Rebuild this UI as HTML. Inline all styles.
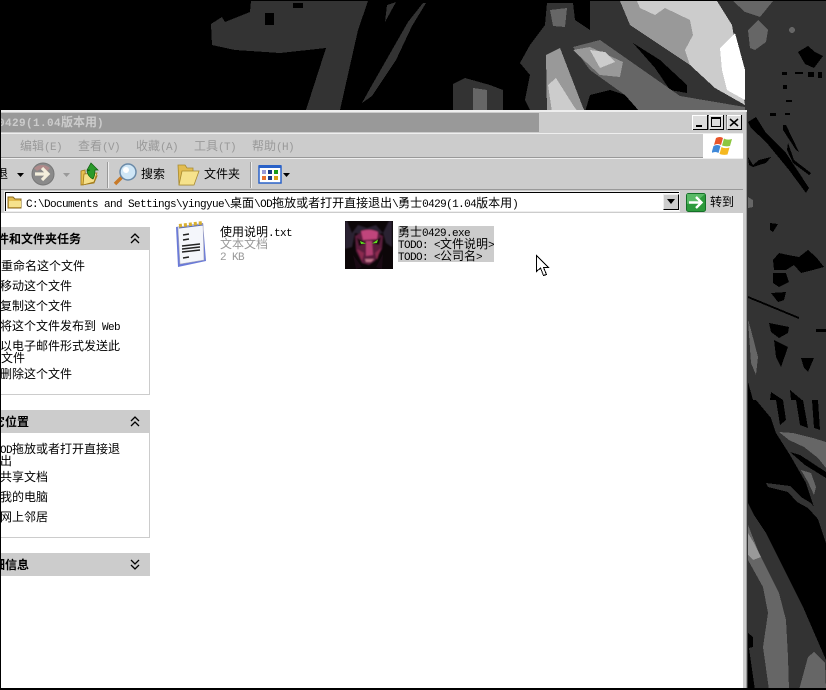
<!DOCTYPE html>
<html><head><meta charset="utf-8">
<style>
html,body{margin:0;padding:0;background:#000;}
#r{position:relative;width:826px;height:690px;overflow:hidden;background:#000;font-family:"WenQuanYi Zen Hei","Noto Sans CJK SC",sans-serif;font-size:12px;color:#000;}
#r div{position:absolute;}
.t{white-space:nowrap;line-height:12px;height:12px;}
.t i{font:normal 11px/12px "Liberation Mono",monospace;letter-spacing:-.6px;}
.t i.h{font-weight:bold;letter-spacing:.4px;}
.b{font-weight:bold;}
.g{color:#999;}
svg{position:absolute;overflow:hidden;}
</style></head><body><div id="r">

<svg style="left:0;top:0" width="826" height="690" viewBox="0 0 826 690" shape-rendering="crispEdges">
<rect width="826" height="690" fill="#000"/>
<g fill="#333">
<polygon points="251,1 368,1 358,30 340,110 306,110 326,48 280,53 235,50 212,45 211,24 222,17 225,22 250,12"/>
<polygon points="387,5 396,2 385,22"/>
<polygon points="423,3 426,3 412,26 396,60 372,96 362,103 372,85 392,50 408,22"/>
<polygon points="453,84 465,78 490,85 503,90 503,112 453,112"/>
<polygon points="520,63 530,45 545,25 547,3 573,3 575,20 590,30 590,1 826,1 826,110 530,110 525,100 530,75"/>
<rect x="746" y="110" width="80" height="580"/>
</g>
<g fill="#000">
<rect x="265" y="13" width="9" height="12"/><rect x="293" y="3" width="10" height="5"/>
<polygon points="590,95 610,90 640,100 665,112 585,112"/>
<polygon points="633,43 660,60 687,85 687,93 670,90 655,68"/>
<polygon points="798,52 808,46 815,52 823,56 814,68 805,64"/>
<rect x="782" y="72" width="5" height="3"/><rect x="795" y="72" width="8" height="2"/><rect x="808" y="72" width="6" height="5"/><rect x="818" y="72" width="4" height="6"/>
<rect x="783" y="85" width="4" height="4"/><rect x="786" y="100" width="6" height="2"/>
</g>
<g fill="#666">
<polygon points="550,10 567,8 565,27 553,26"/>
<polygon points="473,88 487,90 487,112 473,112"/>
<polygon points="573,47 600,40 640,68 680,96 745,107 745,112 640,112 625,95 590,70"/>
<polygon points="733,1 773,1 760,17 745,12"/>
<polygon points="748,30 758,20 768,30 766,42 755,50 750,48"/>
<circle cx="792" cy="30" r="3"/>
</g>
<g fill="#999">
<polygon points="573,50 590,47 623,62 620,77 600,75"/>
<polygon points="546,55 560,48 582,105 585,112 547,112"/>
<polygon points="620,1 717,1 730,25 745,105 715,88 690,65 660,45 630,25"/>
</g>
<g fill="#ccc">
<polygon points="548,85 556,78 573,105 578,112 552,112"/>
<polygon points="590,50 605,52 615,62 600,68"/>
<polygon points="637,1 717,1 732,25 745,105 715,88 690,65 685,50 693,35 690,20 665,8 655,15 640,8"/>
</g>
<polygon fill="#fff" points="720,48 735,33 745,70 745,100 727,90 722,70"/>

<g fill="#000">
<polygon points="748,122 756,117 766,133 786,153 809,188 806,193 789,170 766,142 751,128"/>
<polygon points="783,125 786,125 799,152 796,150 783,130"/>
<polygon points="788,143 794,160 811,173 809,175 793,163 787,150"/>
<polygon points="748,157 753,165 759,160 771,157 766,163 759,165 753,167 749,165"/>
<polygon points="770,223 778,224 773,232 770,230"/>
<polygon points="773,260 779,253 788,255 799,257 808,250 816,257 824,267 813,270 801,273 794,265 786,270 774,270"/>
<polygon points="773,273 786,273 789,282 779,287 773,283"/>
<polygon points="771,293 786,292 784,300 778,302"/>
<polygon points="748,296 799,317 799,319 748,298"/>
<polygon points="769,323 789,327 788,333 779,338 771,332"/>
<polygon points="774,340 788,347 781,367 776,357"/>
<polygon points="801,358 814,358 808,372 804,368"/>
<polygon points="748,382 753,400 748,400"/>
<polygon points="771,392 783,400 770,400"/>
<polygon points="790,390 802,400 791,400"/>
<rect x="816" y="329" width="10" height="3"/><rect x="770" y="113" width="6" height="3"/><rect x="785" y="113" width="5" height="2"/>
<polygon points="748,400 756,400 771,418 776,433 790,455 806,483 826,543 826,660 803,607 783,567 766,533 754,515 748,503"/>
<polygon points="776,400 783,400 786,420 780,425"/>
<polygon points="796,400 803,400 808,428 800,425"/>
<polygon points="812,400 818,400 820,430 814,428"/>
<polygon points="790,452 800,455 826,472 826,478 805,465"/>
<polygon points="748,633 753,637 753,647 749,648 755,690 748,690"/>
</g>
<polygon fill="#333" points="766,483 790,486 801,497 811,503 826,523 826,528 808,508 797,502 788,492 768,487"/>
<g fill="#666">
<polygon points="748,197 753,200 753,207 748,208"/>
<polygon points="748,320 751,330 758,357 756,375 751,363"/>
<polygon points="779,432 793,433 813,438 826,442 826,468 818,458 804,447 789,440"/>
<polygon points="801,470 811,473 816,487 814,495 808,482"/>
<polygon points="748,525 759,553 779,593 786,620 788,657 789,690 769,690 763,647 768,613 763,587 748,560"/>
<polygon points="799,690 808,657 814,652 825,663 826,690"/>
</g>
<polygon fill="#999" points="748,533 754,543 761,557 753,560 748,555"/>
<rect y="688" width="826" height="2" fill="#000"/>
</svg>

<!-- window -->
<div style="left:1px;top:110px;width:746px;height:578px;background:#ccc;border-top:2px solid #eee;box-sizing:border-box;"></div>
<div style="left:746px;top:112px;width:1px;height:576px;background:#999;"></div>
<div style="left:1px;top:113px;width:538px;height:19px;background:#999;"></div>
<div class="t b" style="left:-2px;top:116px;color:#ccc;"><i class="h">0429(1.04</i>版本用<i class="h">)</i></div>

<!-- caption buttons -->
<svg style="left:692px;top:115px" width="51" height="16" shape-rendering="crispEdges">
<g fill="#ccc" stroke="#000"><rect x="0.5" y="0.5" width="15" height="14" fill="#ddd"/><rect x="16.5" y="0.5" width="15" height="14" fill="#ddd"/><rect x="34.5" y="0.5" width="15" height="14" fill="#ddd"/></g>
<path d="M0 .5H15M.5 0V15M17 .5H31M17 .5V15M35 .5H49M35 .5V15" stroke="#fff" fill="none"/>
<rect x="4" y="10" width="6" height="2" fill="#000"/>
<path d="M19.500 3.500h9v8h-9zM19 2.500h10" fill="none" stroke="#000"/>
<path d="M38 4l8 7M46 4l-8 7" stroke="#000" stroke-width="1.500" fill="none" shape-rendering="auto"/>
</svg>

<!-- menu -->
<div style="left:1px;top:133px;width:742px;height:1px;background:#eee;"></div>
<div style="left:1px;top:157px;width:702px;height:1px;background:#999;"></div>
<div style="left:1px;top:158px;width:742px;height:1px;background:#eee;"></div>
<div class="t g" style="left:20px;top:140px;">编辑<i>(E)</i></div>
<div class="t g" style="left:78px;top:140px;">查看<i>(V)</i></div>
<div class="t g" style="left:136px;top:140px;">收藏<i>(A)</i></div>
<div class="t g" style="left:194px;top:140px;">工具<i>(T)</i></div>
<div class="t g" style="left:252px;top:140px;">帮助<i>(H)</i></div>
<div style="left:703px;top:134px;width:40px;height:24px;background:#fff;"></div>
<svg style="left:712px;top:136px" width="22" height="20" viewBox="0 0 22 20">
<path d="M4 2q4-2 7 0l-2 7q-3-2-7 0z" fill="#e8552a"/>
<path d="M12 2.500q3 2 8 .5l-2 7q-4 1-8-.5z" fill="#8cc63f"/>
<path d="M1.500 10q4-2 7 0l-2 7q-3-2-7 0z" fill="#3f88d8"/>
<path d="M9.500 11q3 2 8 .5l-2 7q-4 1-8-.5z" fill="#f5b81f"/>
</svg>

<!-- toolbar -->
<div style="left:1px;top:189px;width:742px;height:1px;background:#999;"></div>
<div class="t" style="left:-4px;top:168px;">退</div>
<svg style="left:0;top:160px" width="300" height="30" viewBox="0 0 300 30">
<path d="M17 13h7l-3.500 4z" fill="#000"/>
<circle cx="43" cy="14" r="11" fill="#8a8a8a" stroke="#777"/>
<path d="M34 8q8-6 16 0l-3 3q-5-4-10 0z" fill="#b08a8a"/>
<path d="M35 14h12M42 8l6 6-6 6" stroke="#f4efdc" stroke-width="3.200" fill="none"/>
<path d="M63 13h7l-3.500 4z" fill="#999"/>
<path d="M81 11l4-1 1 12 11-6-3 7-13 2z" fill="#e8c050" stroke="#a07818" stroke-width=".8"/>
<path d="M84 14l13-1-3 9-11 3z" fill="#f6e08a" stroke="#a07818" stroke-width=".8"/>
<path d="M91 3l7 7h-3q0 6-2 9-5-2-6-8l3-1h-3z" fill="#2a9a2a" stroke="#0c5c0c" stroke-width=".7"/>
<rect x="107" y="2" width="1" height="26" fill="#999"/><rect x="108" y="2" width="1" height="26" fill="#eee"/>
<path d="M115 24l8-8" stroke="#c87a28" stroke-width="3.500" fill="none"/>
<circle cx="128" cy="12" r="8" fill="#cfe6f6" stroke="#6a8aa8" stroke-width="1.500"/>
<circle cx="126" cy="10" r="3" fill="#fff"/>
<path d="M178 5h7l2 3h6v17h-14z" fill="#e2bc50" stroke="#a88a30" stroke-width=".8"/>
<path d="M182 11h17l-5 14h-15z" fill="#f6e28c" stroke="#a88a30" stroke-width=".8"/>
<rect x="250" y="2" width="1" height="26" fill="#999"/><rect x="251" y="2" width="1" height="26" fill="#eee"/>
<rect x="259" y="6" width="22" height="17" fill="#fff" stroke="#2a62c8" stroke-width="1.500"/>
<rect x="259" y="5" width="22" height="3" fill="#2a62c8"/>
<g shape-rendering="crispEdges">
<rect x="262" y="10" width="4" height="4" fill="#9a9ad8"/><rect x="268" y="10" width="4" height="4" fill="#1a3a8a"/><rect x="274" y="10" width="4" height="4" fill="#1a9a1a"/>
<rect x="262" y="16" width="4" height="4" fill="#e87030"/><rect x="268" y="16" width="4" height="4" fill="#1a3a8a"/><rect x="274" y="16" width="4" height="4" fill="#d8a018"/>
</g>
<path d="M283 13h7l-3.500 4z" fill="#000"/>
</svg>
<div class="t" style="left:141px;top:168px;">搜索</div>
<div class="t" style="left:204px;top:168px;">文件夹</div>

<!-- address -->
<div style="left:4px;top:191px;width:676px;height:21px;background:#eee;"></div>
<div style="left:5px;top:192px;width:674px;height:19px;background:#fff;border-top:1px solid #000;border-left:1px solid #000;box-sizing:border-box;"></div>
<svg style="left:7px;top:195px" width="16" height="14" viewBox="0 0 16 14">
<path d="M1 2h5l2 2h6v9H1z" fill="#e2bc50" stroke="#8a6a20"/><path d="M2 6h12v6H2z" fill="#f6e28c"/>
</svg>
<div class="t" style="left:26px;top:197px;"><i>C:\Documents and Settings\yingyue\</i>桌面<i>\OD</i>拖放或者打开直接退出<i>\</i>勇士<i>0429(1.04</i>版本用<i>)</i></div>
<div style="left:663px;top:194px;width:16px;height:16px;background:#ccc;border:1px solid #000;border-top-color:#eee;border-left-color:#eee;box-sizing:border-box;"></div>
<svg style="left:666px;top:199px" width="10" height="6"><path d="M1 0h8L5 5z" fill="#000"/></svg>
<svg style="left:686px;top:193px" width="20" height="19" viewBox="0 0 20 19">
<rect x=".5" y=".5" width="19" height="18" rx="2" fill="#2c9a3c" stroke="#157028"/>
<path d="M1 1h18l-9 8-9 2z" fill="#6cc878" opacity=".7"/>
<path d="M3 9.500h12M10 4l5.500 5.500L10 15" stroke="#fff" stroke-width="2.400" fill="none"/>
</svg>
<div class="t" style="left:710px;top:196px;">转到</div>

<!-- content -->
<div style="left:1px;top:213px;width:742px;height:475px;background:#fff;"></div>

<!-- left panels -->
<div style="left:1px;top:227px;width:149px;height:23px;background:#ccc;"></div>
<div style="left:1px;top:250px;width:149px;height:145px;background:#fff;border:solid #ccc;border-width:0 1px 1px 0;box-sizing:border-box;"></div>
<div class="t b" style="left:-3px;top:233px;">件和文件夹任务</div>
<div class="t" style="left:1px;top:260px;">重命名这个文件</div>
<div class="t" style="left:0;top:280px;">移动这个文件</div>
<div class="t" style="left:0;top:300px;">复制这个文件</div>
<div class="t" style="left:0;top:320px;">将这个文件发布到<i> Web</i></div>
<div class="t" style="left:0;top:340px;">以电子邮件形式发送此</div>
<div class="t" style="left:1px;top:352px;">文件</div>
<div class="t" style="left:0;top:368px;">删除这个文件</div>

<div style="left:1px;top:410px;width:149px;height:23px;background:#ccc;"></div>
<div style="left:1px;top:433px;width:149px;height:105px;background:#fff;border:solid #ccc;border-width:0 1px 1px 0;box-sizing:border-box;"></div>
<div class="t b" style="left:-7px;top:416px;">它位置</div>
<div class="t" style="left:0;top:443px;"><i>OD</i>拖放或者打开直接退</div>
<div class="t" style="left:0;top:455px;">出</div>
<div class="t" style="left:0;top:471px;">共享文档</div>
<div class="t" style="left:0;top:491px;">我的电脑</div>
<div class="t" style="left:0;top:511px;">网上邻居</div>

<div style="left:1px;top:553px;width:149px;height:23px;background:#ccc;"></div>
<div class="t b" style="left:-7px;top:559px;">细信息</div>

<svg style="left:130px;top:233px" width="10" height="12" fill="none" stroke="#000" stroke-width="1.300"><path d="M1 5l4-4 4 4M1 10l4-4 4 4"/></svg>
<svg style="left:130px;top:416px" width="10" height="12" fill="none" stroke="#000" stroke-width="1.300"><path d="M1 5l4-4 4 4M1 10l4-4 4 4"/></svg>
<svg style="left:130px;top:559px" width="10" height="12" fill="none" stroke="#000" stroke-width="1.300"><path d="M1 1l4 4 4-4M1 6l4 4 4-4"/></svg>
<div style="left:0;top:110px;width:1px;height:580px;background:#000;"></div>

<!-- notepad icon -->
<svg style="left:174px;top:220px" width="34" height="48" viewBox="0 0 34 48">
<path d="M2 7L29 3l3 38L4 47z" fill="#6a7ad8"/>
<path d="M4 7L29 4l1 36L6 44z" fill="#f4f6fb" stroke="#aab" stroke-width=".6"/>
<path d="M5 6l24-3" stroke="#d8b030" stroke-width="4" stroke-dasharray="3 2"/>
<path d="M5 8l24-3" stroke="#5a6ab0" stroke-width="1"/>
<g stroke="#222" stroke-width="1.400"><path d="M9 15l6-1M9 20l6-1M8 26l18-2M8 29l18-2M8 32l18-2M9 38l6-1"/></g>
</svg>
<div class="t" style="left:220px;top:226px;">使用说明<i>.txt</i></div>
<div class="t g" style="left:220px;top:238px;">文本文档</div>
<div class="t g" style="left:220px;top:250px;"><i>2 KB</i></div>

<!-- exe icon -->
<svg style="left:345px;top:221px" width="48" height="48" viewBox="0 0 48 48">
<defs><filter id="bl" x="-10%" y="-10%" width="120%" height="120%"><feGaussianBlur stdDeviation=".9"/></filter></defs>
<rect width="48" height="48" fill="#0c0608"/>
<g filter="url(#bl)">
<path d="M2 0l5 12 6-8 9 3 9-3 7 8 6-12h3v26l-6-4-3-10-8 2H19l-9-2-3 14-7 2V0z" fill="#2a2030"/>
<path d="M10 15q13-9 28 0l-1 13-7 12-6 4-7-2-6-12z" fill="#5c1c3c"/>
<path d="M16 10q9-3 17 1l-1 7-14 1z" fill="#c0447c"/>
<path d="M21 20l6 0 1 14-7 1z" fill="#b03c70"/>
<path d="M12 28l7 4-2 8zM36 27l-6 5 2 7z" fill="#8c2c50"/>
<path d="M12 17l9 5-7 3zM36 16l-9 6 7 2z" fill="#14080c"/>
<path d="M20 38h9l-3 3h-5z" fill="#c07088"/>
</g>
<path d="M15 20l6 2.500-5 .5zM33 18.500l-6 4 5-.5z" fill="#60e020"/>
<path d="M8 34l9 12-6 2zM38 33l-7 13 6 2z" fill="#1a0a14"/>
</svg>
<div style="left:398px;top:226px;width:96px;height:36px;background:#ccc;"></div>
<div class="t" style="left:398px;top:226px;">勇士<i>0429.exe</i></div>
<div class="t" style="left:398px;top:238px;"><i>TODO: &lt;</i>文件说明<i>&gt;</i></div>
<div class="t" style="left:398px;top:250px;"><i>TODO: &lt;</i>公司名<i>&gt;</i></div>

<!-- cursor -->
<svg style="left:535px;top:254px" width="16" height="23" shape-rendering="crispEdges">
<path d="M1.500 1.500V17.500L5.500 14L8.500 21.500L11.500 20.500L8.500 13.500H13.500Z" fill="#fff" stroke="#000"/>
</svg>

</div></body></html>
